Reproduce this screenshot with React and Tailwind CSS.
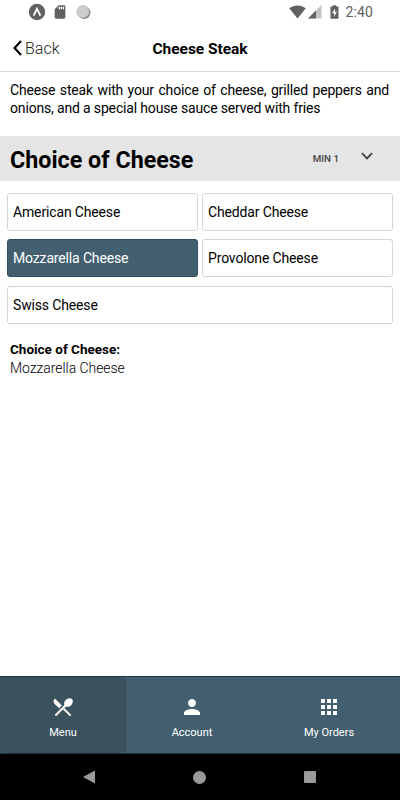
import React, { useState } from 'react';
import { MdApps, MdPerson, MdRestaurantMenu, MdSdCard } from 'react-icons/md';

const CHEESES = [
  { name: 'American Cheese', span: '' },
  { name: 'Cheddar Cheese', span: '' },
  { name: 'Mozzarella Cheese', span: '' },
  { name: 'Provolone Cheese', span: '' },
  { name: 'Swiss Cheese', span: 'col-span-2' },
];

const TABS = [
  { name: 'Menu', icon: MdRestaurantMenu, width: 'w-[126px]' },
  { name: 'Account', icon: MdPerson, width: 'w-[132px]' },
  { name: 'My Orders', icon: MdApps, width: 'w-[142px]' },
];

function StatusBar() {
  return (
    <div className="flex h-6 items-center pl-[28px] pr-[27px] text-[#616161]">
      <svg className="h-[18px] w-[18px]" viewBox="0 0 18 18">
        <circle cx="9" cy="9" r="8.2" fill="#616161" />
        <path d="M5.6 12.6 9 5.8l3.4 6.8" fill="none" stroke="#fff" strokeWidth="1.9" />
      </svg>
      <MdSdCard className="ml-[6px] h-4 w-4" />
      <svg className="ml-[8px] h-[15px] w-[15px]" viewBox="0 0 15 15">
        <circle cx="8.2" cy="7.8" r="6.2" fill="#858585" />
        <circle cx="7" cy="6.7" r="6.1" fill="#cdcdcd" stroke="#b5b5b5" strokeWidth="0.8" />
      </svg>
      <div className="ml-auto flex items-center">
        <svg className="h-[14px] w-[17px]" viewBox="0 0 17 14">
          <path d="M8.5 13.6.2 3.3C2.5 1.4 5.4.4 8.5.4s6 1 8.3 2.9z" fill="#616161" />
        </svg>
        <svg className="ml-[2px] h-[14px] w-[14px]" viewBox="0 0 14 14">
          <path d="M0 13.5 13.5 0v13.5z" fill="#c4c4c4" />
          <path d="M0 13.5 8 5.5v8z" fill="#616161" />
        </svg>
        <svg className="ml-[8px] h-[14px] w-[9px]" viewBox="0 0 9 14">
          <path d="M2.8.3h3.4v1.3h2.3v12.1h-8V1.6h2.3z" fill="#616161" />
          <path d="M5 3.5 2 8.2h2v3.3l3-4.7H5z" fill="#fff" />
        </svg>
        <span className="ml-[7px] text-[14px] leading-6 tracking-[0.1px]">2:40</span>
      </div>
    </div>
  );
}

function Header() {
  return (
    <div className="grid h-12 grid-cols-[1fr_auto_1fr] items-center border-b border-[#d8d8d8] text-black">
      <button className="flex items-center pl-[13px] text-left">
        <svg className="h-4 w-[9px]" viewBox="0 0 9 16">
          <path d="M8 1 1.6 8 8 15" fill="none" stroke="currentColor" strokeWidth="2.2" />
        </svg>
        <span className="ml-[3px] pt-[2px] text-[16px] font-light leading-5 text-[#222]">Back</span>
      </button>
      <h1 className="pt-[2px] text-[15.5px] font-bold leading-5 tracking-[-0.03px]">Cheese Steak</h1>
      <span />
    </div>
  );
}

export default function App() {
  const [selected, setSelected] = useState('Mozzarella Cheese');
  const [activeTab, setActiveTab] = useState('Menu');

  return (
    <div className="flex h-[800px] w-[400px] flex-col overflow-hidden bg-white font-['Roboto',sans-serif] text-black">
      <StatusBar />
      <Header />

      <div className="flex-1">
        <p className="mt-[10px] h-[54px] px-[10px] pr-[11px] text-justify text-[14px] leading-[17.5px] tracking-[-0.16px]">
          Cheese steak with your choice of cheese, grilled peppers and onions, and a special house sauce served with fries
        </p>

        {/* Option group heading */}
        <div className="flex h-[45px] items-center bg-[#e5e5e5] pl-[10px] pr-[27px]">
          <h2 className="pt-[3px] text-[23.3px] font-bold">Choice of Cheese</h2>
          <span className="ml-auto pt-[2px] text-[9.8px] font-medium text-[#444]">MIN 1</span>
          <svg className="mb-[5px] ml-[22px] h-2 w-3" viewBox="0 0 12 8">
            <path d="M.9 1.2 6 6.3l5.1-5.1" fill="none" stroke="#444" strokeWidth="1.9" />
          </svg>
        </div>

        {/* Options */}
        <div className="mt-[11.5px] grid grid-cols-2 gap-x-1 gap-y-[8.5px] px-[7px]">
          {CHEESES.map((cheese) => (
            <button
              key={cheese.name}
              onClick={() => setSelected(cheese.name)}
              className={`h-[38px] rounded-[3px] border pl-[5px] pt-px text-left text-[14px] tracking-[-0.15px] ${cheese.span} ${
                selected === cheese.name
                  ? 'border-[#2c5065] bg-[#435f6f] text-white'
                  : 'border-[#d6d6d6] bg-white text-black'
              }`}
            >
              {cheese.name}
            </button>
          ))}
        </div>

        {/* Current choice */}
        <div className="mt-[16.5px] pl-[10px] leading-[18.5px]">
          <p className="text-[13.5px] font-bold">Choice of Cheese:</p>
          <p className="text-[14px] font-light tracking-[-0.05px]">{selected}</p>
        </div>
      </div>

      {/* Tab bar */}
      <div className="flex h-[78px] border-b border-t border-b-[#20343f] border-t-[#12394d] bg-[#435f6f] text-white">
        {TABS.map(({ name, icon: Icon, width }) => (
          <button
            key={name}
            onClick={() => setActiveTab(name)}
            className={`flex flex-col items-center pt-[18px] ${width} ${
              activeTab === name ? 'rounded-[3px] bg-[#3a515e]' : ''
            }`}
          >
            <Icon className="h-6 w-6" />
            <span className="mt-[6px] text-[11px] leading-4">{name}</span>
          </button>
        ))}
      </div>

      {/* System navigation */}
      <div className="flex h-[46px] items-center bg-black pl-[83px] text-[#9a9a9a]">
        <svg className="h-[14px] w-3" viewBox="0 0 12 14">
          <path d="M12 .5v13L0 7z" fill="currentColor" />
        </svg>
        <div className="ml-[98px] h-[13px] w-[13px] rounded-full bg-[#9a9a9a]" />
        <div className="ml-[98px] h-3 w-3 rounded-[1px] bg-[#9a9a9a]" />
      </div>
    </div>
  );
}
